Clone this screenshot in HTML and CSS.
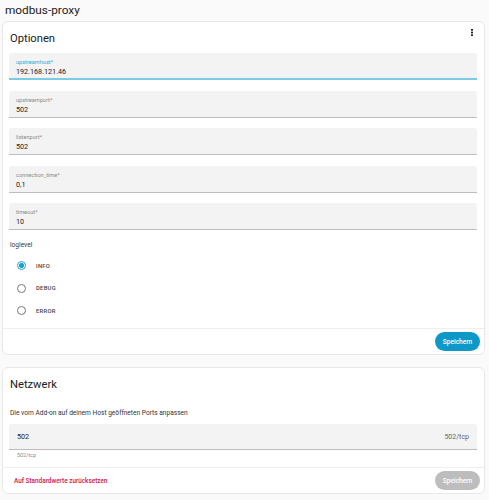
FILE: index.html
```html
<!DOCTYPE html>
<html lang="de">
<head>
    <meta charset="UTF-8">
    <meta name="viewport" content="width=device-width, initial-scale=1.0">
    <title>modbus-proxy</title>
    <link rel="stylesheet" href="styles.css">
</head>
<body>
    <h1 class="page-title">modbus-proxy</h1>

    <!-- Options card -->
    <section class="card">
        <div class="card-header">
            <h2 class="card-title">Optionen</h2>
            <svg class="menu-icon" viewBox="0 0 2 7" width="2" height="7">
                <rect x="0" y="0" width="2" height="1.7" fill="#222"/>
                <rect x="0" y="2.65" width="2" height="1.7" fill="#222"/>
                <rect x="0" y="5.3" width="2" height="1.7" fill="#222"/>
            </svg>
        </div>
        <div class="card-content">
            <div class="field focused">
                <span class="field-label">upstreamhost*</span>
                <span class="field-value">192.168.121.46</span>
            </div>
            <div class="field">
                <span class="field-label">upstreamport*</span>
                <span class="field-value">502</span>
            </div>
            <div class="field">
                <span class="field-label">listenport*</span>
                <span class="field-value">502</span>
            </div>
            <div class="field">
                <span class="field-label">connection_time*</span>
                <span class="field-value">0,1</span>
            </div>
            <div class="field">
                <span class="field-label">timeout*</span>
                <span class="field-value">10</span>
            </div>

            <div class="radio-group">
                <div class="radio-title">loglevel</div>
                <label class="radio checked"><span class="radio-dot"></span>INFO</label>
                <label class="radio"><span class="radio-dot"></span>DEBUG</label>
                <label class="radio"><span class="radio-dot"></span>ERROR</label>
            </div>
        </div>
        <div class="card-actions">
            <button class="btn">Speichern</button>
        </div>
    </section>

    <!-- Network card -->
    <section class="card">
        <div class="card-header">
            <h2 class="card-title">Netzwerk</h2>
        </div>
        <div class="card-content">
            <p class="card-text">Die vom Add-on auf deinem Host geöffneten Ports anpassen</p>
            <div class="field port-field">
                <span class="field-value">502</span>
                <span class="field-suffix">502/tcp</span>
            </div>
            <div class="field-helper">502/tcp</div>
        </div>
        <div class="card-actions split">
            <a class="reset-link" href="#">Auf Standardwerte zurücksetzen</a>
            <button class="btn disabled">Speichern</button>
        </div>
    </section>
</body>
</html>
```

FILE: styles.css
```css
/* General styling */
body {
    font-family: Roboto, "Noto Sans", sans-serif;
    margin: 0;
    padding: 0 4px 0 2px;
    background-color: #fafafa;
    color: #212121;
}
.page-title {
    font-size: 11.8px;
    font-weight: 400;
    margin: 0;
    padding: 3px 3px 0;
    height: 18px;
    line-height: 14px;
}
/* Cards */
.card {
    background-color: #fff;
    border: 1px solid #e8e8e8;
    border-radius: 6px;
    margin-bottom: 12px;
}
.card-header {
    display: flex;
    justify-content: space-between;
    align-items: center;
    padding: 6px 7px 0 7px;
    height: 20px;
}
.card-title {
    font-size: 11.2px;
    font-weight: 400;
    margin: 0;
}
.menu-icon {
    align-self: flex-start;
    margin-right: 4px;
    margin-top: 1px;
}
.card-content {
    padding: 5px 7px 0 6px;
}
/* Text fields */
.field {
    box-sizing: border-box;
    display: flex;
    flex-direction: column;
    justify-content: flex-end;
    height: 27px;
    margin-bottom: 10.5px;
    padding: 0 7px 3px;
    background-color: #f3f3f3;
    border-radius: 3px 3px 0 0;
    border-bottom: 1px solid #bdbdbd;
}
.field.focused {
    border-bottom: 2px solid #7ccbe4;
    padding-bottom: 2px;
}
.field-label {
    font-size: 5.6px;
    color: #8a8a8a;
    line-height: 7px;
    margin-bottom: 1px;
}
.focused .field-label {
    color: #35a8d8;
}
.field-value {
    font-size: 7.2px;
    line-height: 9px;
    color: #222;
}
/* Radio buttons */
.radio-title {
    font-size: 6.6px;
    color: #333;
    margin: 3px 0 6px 1px;
}
.radio {
    display: flex;
    align-items: center;
    height: 22.5px;
    padding-left: 8px;
    font-size: 5.8px;
    font-weight: 500;
    letter-spacing: 0.3px;
    color: #444;
}
.radio-dot {
    box-sizing: border-box;
    width: 9px;
    height: 9px;
    margin-right: 10px;
    border: 1.2px solid #777;
    border-radius: 50%;
}
.radio.checked .radio-dot {
    border-color: #1c9fd0;
    background: radial-gradient(circle, #1c9fd0 0 2.2px, transparent 2.6px);
}
/* Actions */
.card-actions {
    display: flex;
    justify-content: flex-end;
    align-items: center;
    margin-top: 6px;
    padding: 3px 4px 3px 7px;
    border-top: 1px solid #eee;
}
.card-actions.split {
    justify-content: space-between;
    margin-top: 9px;
}
.btn {
    font-family: inherit;
    width: 45px;
    height: 19px;
    padding: 0;
    border: none;
    border-radius: 10px;
    background-color: #0d98c8;
    color: #fff;
    font-size: 6.6px;
    font-weight: 500;
}
.btn.disabled {
    background-color: #bdbdbd;
}
.card-text {
    font-size: 6.6px;
    color: #333;
    margin: 10px 0 7px 1px;
}
.port-field {
    flex-direction: row;
    justify-content: space-between;
    align-items: center;
    margin-bottom: 2px;
    padding: 0 8px 0 8px;
    height: 26px;
}
.field-suffix {
    font-size: 7px;
    color: #666;
}
.field-helper {
    font-size: 5.4px;
    color: #8a8a8a;
    padding-left: 8px;
}
.reset-link {
    font-size: 6.4px;
    font-weight: 500;
    color: #cf1651;
    text-decoration: none;
    padding-left: 4px;
}
```
